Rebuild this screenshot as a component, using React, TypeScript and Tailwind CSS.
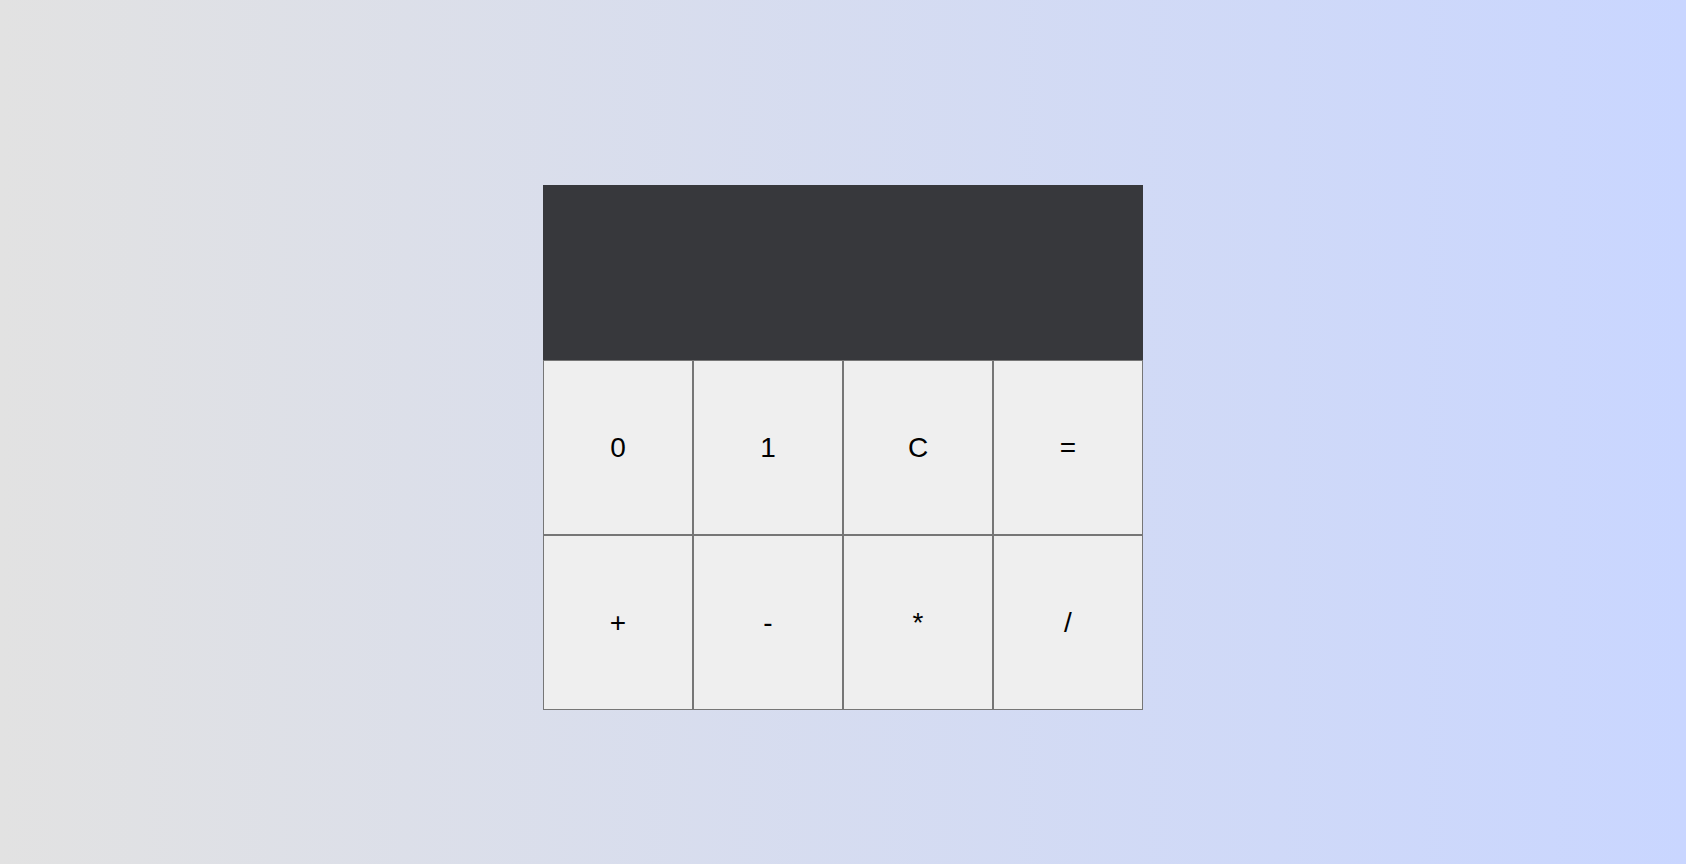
import React from "react";

export default function App() {
  const keys = ["0", "1", "C", "=", "+", "-", "*", "/"];
  return (
    <div
      className="w-full h-[864px] bg-[linear-gradient(to_right,#e2e2e2,#c9d6ff)] flex justify-center pt-[185px]"
      style={{ fontFamily: '"Liberation Sans", Arial, sans-serif' }}
    >
      <div className="w-[600px] flex flex-col">
        <div className="h-[175px] bg-[#37383c]"></div>
        <div className="grid grid-cols-4">
          {keys.map((k) => (
            <button
              key={k}
              className="h-[175px] bg-[#efefef] border border-[#767676] text-[28px] text-black flex items-center justify-center"
            >
              {k}
            </button>
          ))}
        </div>
      </div>
    </div>
  );
}
